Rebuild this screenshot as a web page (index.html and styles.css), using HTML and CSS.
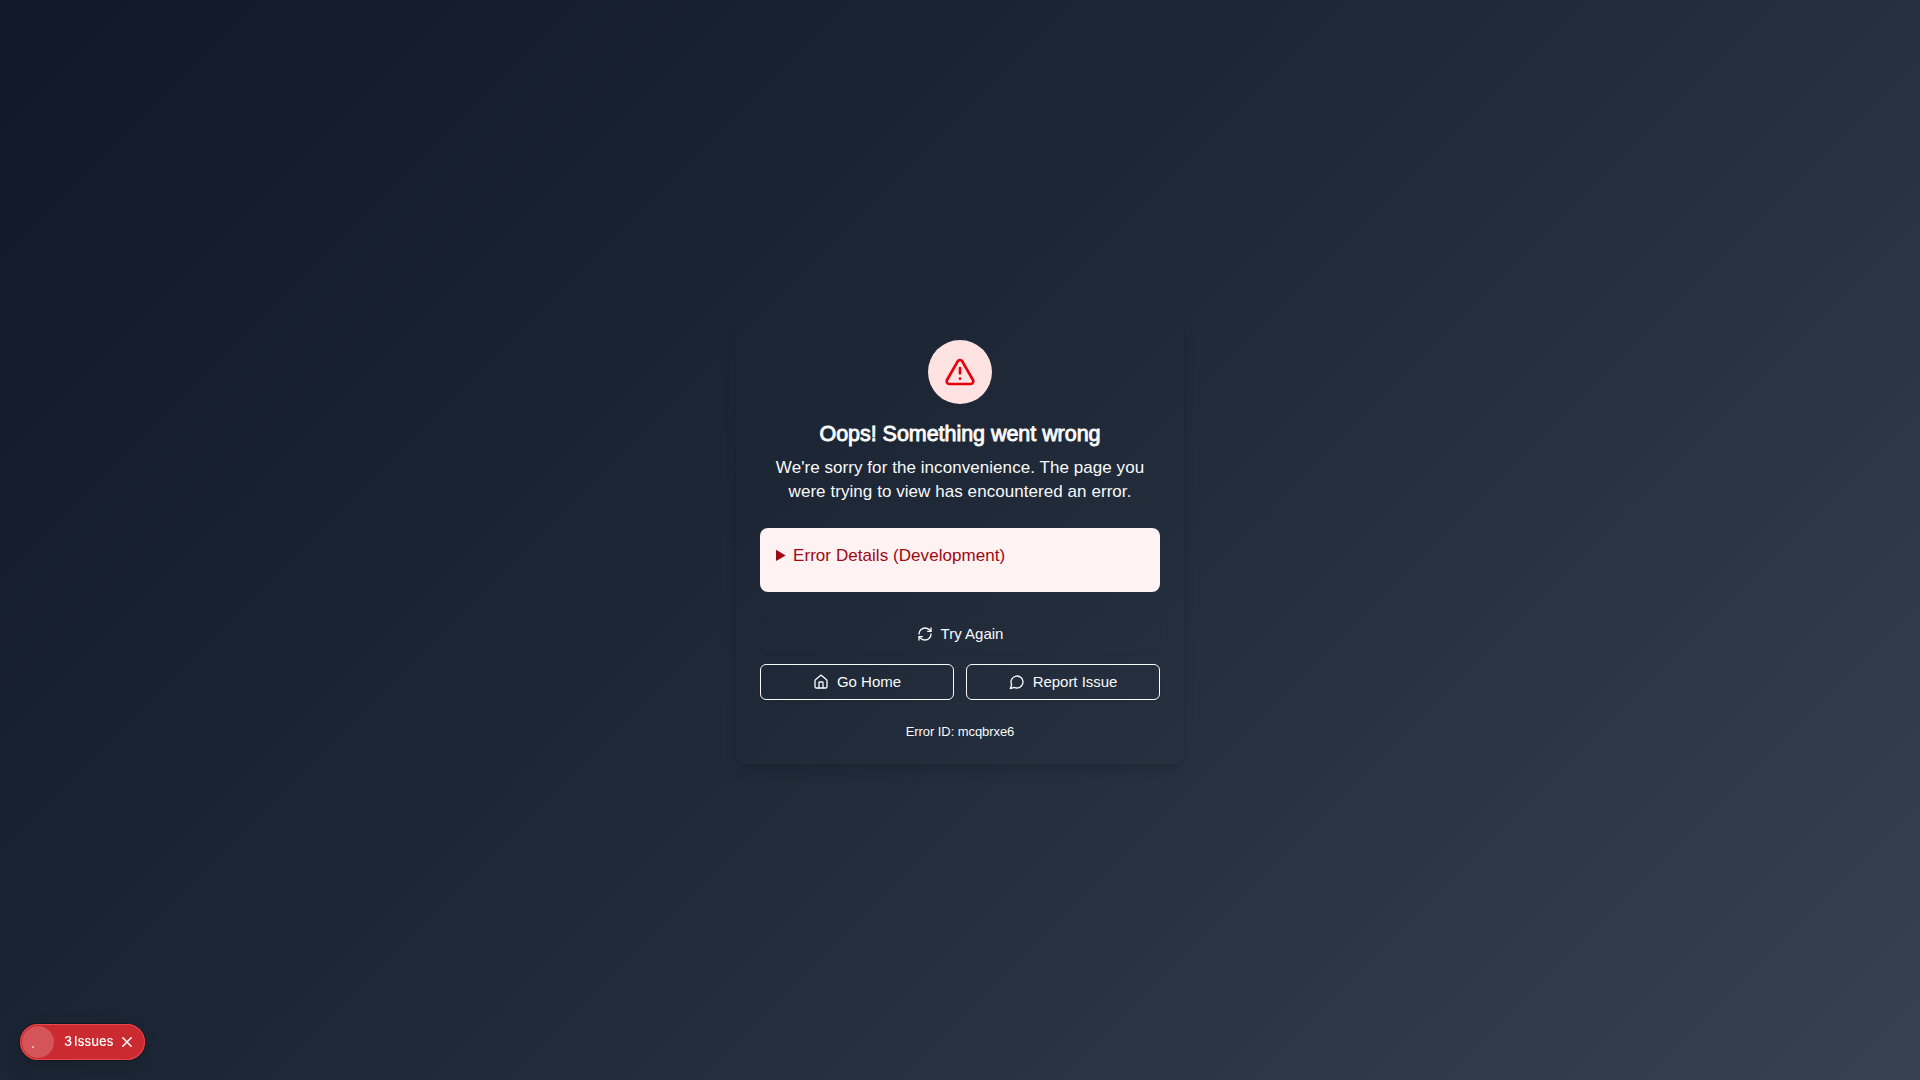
FILE: index.html
```html
<!DOCTYPE html>
<html lang="en">
<head>
<meta charset="utf-8">
<title>Something went wrong</title>
<link rel="stylesheet" href="styles.css">
</head>
<body>
<main class="page">
  <section class="card">
    <div class="badge">
      <svg class="badge-icon" viewBox="0 0 24 24"><path d="m21.73 18-8-14a2 2 0 0 0-3.48 0l-8 14A2 2 0 0 0 4 21h16a2 2 0 0 0 1.73-3"/><path d="M12 9v4"/><path d="M12 17h.01"/></svg>
    </div>
    <h1 class="title">Oops! Something went wrong</h1>
    <p class="description">We're sorry for the inconvenience. The page you<br>were trying to view has encountered an error.</p>
    <details class="details">
      <summary class="summary"><span class="summary-label">Error Details (Development)</span></summary>
    </details>
    <div class="actions">
      <button class="button button-primary">
        <svg class="icon" viewBox="0 0 24 24"><path d="M3 12a9 9 0 0 1 9-9 9.75 9.75 0 0 1 6.74 2.74L21 8"/><path d="M21 3v5h-5"/><path d="M21 12a9 9 0 0 1-9 9 9.75 9.75 0 0 1-6.74-2.74L3 16"/><path d="M8 16H3v5"/></svg>
        <span class="button-label">Try Again</span>
      </button>
      <div class="row">
        <button class="button button-outline">
          <svg class="icon" viewBox="0 0 24 24"><path d="M15 21v-8a1 1 0 0 0-1-1h-4a1 1 0 0 0-1 1v8"/><path d="M3 10a2 2 0 0 1 .709-1.528l7-5.999a2 2 0 0 1 2.582 0l7 5.999A2 2 0 0 1 21 10v9a2 2 0 0 1-2 2H5a2 2 0 0 1-2-2z"/></svg>
          <span class="button-label">Go Home</span>
        </button>
        <button class="button button-outline">
          <svg class="icon" viewBox="0 0 24 24"><path d="M7.9 20A9 9 0 1 0 4 16.1L2 22Z"/></svg>
          <span class="button-label button-label-report">Report Issue</span>
        </button>
      </div>
    </div>
    <p class="error-id">Error ID: mcqbrxe6</p>
  </section>
</main>
<aside class="issues">
  <span class="issues-mark"><span class="issues-dot"></span></span>
  <span class="issues-label">3 <span>Issues</span></span>
  <svg class="issues-close" viewBox="0 0 14 14"><path d="M2.8 2.8l8.4 8.4M11.2 2.8l-8.4 8.4"/></svg>
</aside>
</body>
</html>
```
FILE: styles.css
```css
* {
  box-sizing: border-box;
}

body,
h1,
p {
  margin: 0;
}

body {
  font-family: "Liberation Sans", Arial, sans-serif;
  color: #f9fafb;
}

.page {
  display: flex;
  align-items: center;
  justify-content: center;
  height: 100vh;
  background: linear-gradient(135deg, #111827, #1f2937, #374151);
}

.card {
  display: flex;
  flex-direction: column;
  width: 448px;
  height: 448px;
  padding: 24px;
  border-radius: 10px;
  box-shadow: 0 10px 15px -3px rgb(0 0 0 / 10%), 0 4px 6px -4px rgb(0 0 0 / 10%);
}

.badge {
  display: flex;
  align-items: center;
  justify-content: center;
  align-self: center;
  width: 64px;
  height: 64px;
  border-radius: 50%;
  background: #ffe2e2;
}

.badge-icon,
.icon,
.issues-close {
  fill: none;
  stroke: currentColor;
  stroke-width: 2;
  stroke-linecap: round;
  stroke-linejoin: round;
}

.badge-icon {
  width: 32px;
  height: 32px;
  color: #e7000b;
}

.title {
  margin-top: 14px;
  font-size: 21.5px;
  font-weight: 400;
  line-height: 32px;
  letter-spacing: -0.04px;
  text-align: center;
  -webkit-text-stroke: 0.9px currentColor;
}

.description {
  margin-top: 6px;
  font-size: 17px;
  line-height: 24px;
  letter-spacing: 0.06px;
  text-align: center;
}

.details {
  height: 64px;
  margin-top: 24px;
  padding: 16px;
  border-radius: 8px;
  background: #fef2f2;
}

.summary {
  color: #9f0712;
  font-size: 17px;
  line-height: 24px;
  letter-spacing: 0.06px;
}

.summary-label {
  margin-left: -1px;
}

.actions {
  display: flex;
  flex-direction: column;
  gap: 12px;
  margin-top: 24px;
}

.row {
  display: grid;
  grid-template-columns: 1fr 1fr;
  gap: 12px;
}

.button {
  display: flex;
  align-items: center;
  justify-content: center;
  gap: 8px;
  height: 36px;
  padding: 0;
  border: 0;
  border-radius: 6px;
  background: transparent;
  color: #f9fafb;
  font: 15px "Liberation Sans", Arial, sans-serif;
  box-shadow: 0 1px 2px rgb(0 0 0 / 8%);
}

.button-outline {
  border: 1px solid #f9fafb;
}

.button-label {
  padding-bottom: 2px;
}

.button-label-report {
  letter-spacing: -0.04px;
}

.icon {
  width: 16px;
  height: 16px;
}

.error-id {
  margin-top: 24px;
  font-size: 13px;
  line-height: 16px;
  letter-spacing: -0.07px;
  text-align: center;
}

.issues {
  position: fixed;
  left: 20px;
  bottom: 20px;
  display: flex;
  align-items: center;
  width: 125px;
  height: 36px;
  padding: 1px;
  border-radius: 18px;
  background: #ca2a30;
  color: #fff;
  font: 500 13px Inter, sans-serif;
  box-shadow: inset 0 0 0 1px #e5484d, 0 0 0 1px rgb(0 0 0 / 30%), 0 8px 20px rgb(0 0 0 / 12%);
}

.issues-mark {
  display: flex;
  width: 32px;
  height: 32px;
  margin-left: 1px;
  padding: 20px 0 0 10px;
  border-radius: 50%;
  background: rgb(255 255 255 / 20%);
}

.issues-dot {
  width: 2px;
  height: 2px;
  background: rgb(255 255 255 / 50%);
}

.issues-label {
  display: flex;
  gap: 2px;
  margin-left: 10px;
  padding-bottom: 2px;
  letter-spacing: -0.12px;
}

.issues-close {
  width: 14px;
  height: 14px;
  margin-left: 7px;
  stroke-width: 1.5;
}
```
